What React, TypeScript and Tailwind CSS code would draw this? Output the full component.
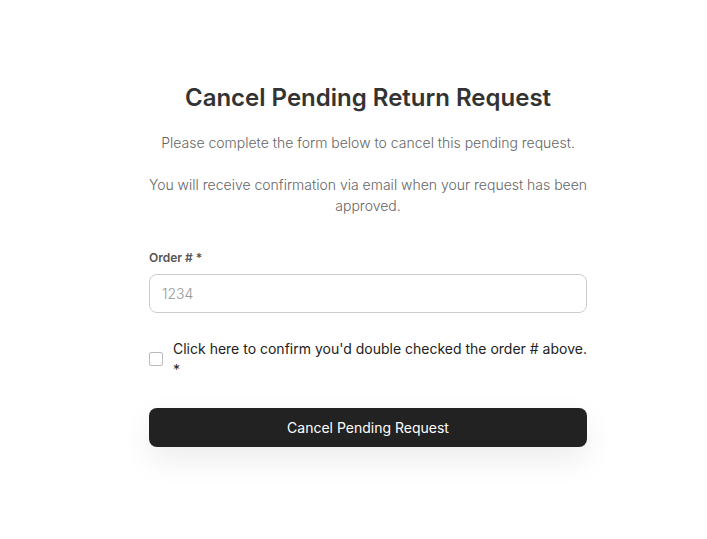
export default function App() {
  return (
    <div className="min-h-screen bg-white font-['Inter',sans-serif]">
      <div className="ml-[149px] w-[438px] pt-[82px]">
        <h1 className="text-center text-2xl leading-8 font-semibold text-[#333333]">
          Cancel Pending Return Request
        </h1>
        <p className="mt-[18px] text-center text-sm leading-[21px] font-light text-[#666666]">
          Please complete the form below to cancel this pending request.
        </p>
        <p className="-mx-[6px] mt-[21px] text-center text-sm leading-[21px] font-light text-[#666666]">
          You will receive confirmation via email when your request has been approved.
        </p>

        <label className="mt-[34px] block text-xs leading-4 font-semibold text-[#555555]">
          Order # *
        </label>
        <input
          type="text"
          placeholder="1234"
          className="mt-2 block h-[39px] w-full rounded-lg border border-[#cccccc] px-3 text-sm font-light text-[#333333] placeholder:text-[#999999] outline-none"
        />

        <label className="mt-[25px] flex items-center gap-[10px]">
          <span className="block h-[14px] w-[14px] shrink-0 rounded-[2px] border border-[#bbbbbb] bg-white" />
          <span className="text-sm leading-[21px] font-normal text-[#222222]">
            Click here to confirm you'd double checked the order # above. *
          </span>
        </label>

        <button className="mt-[28px] h-[39px] w-full rounded-lg bg-[#222222] text-sm font-normal text-white shadow-[0_12px_30px_rgba(0,0,0,0.08)]">
          Cancel Pending Request
        </button>
      </div>
    </div>
  );
}
